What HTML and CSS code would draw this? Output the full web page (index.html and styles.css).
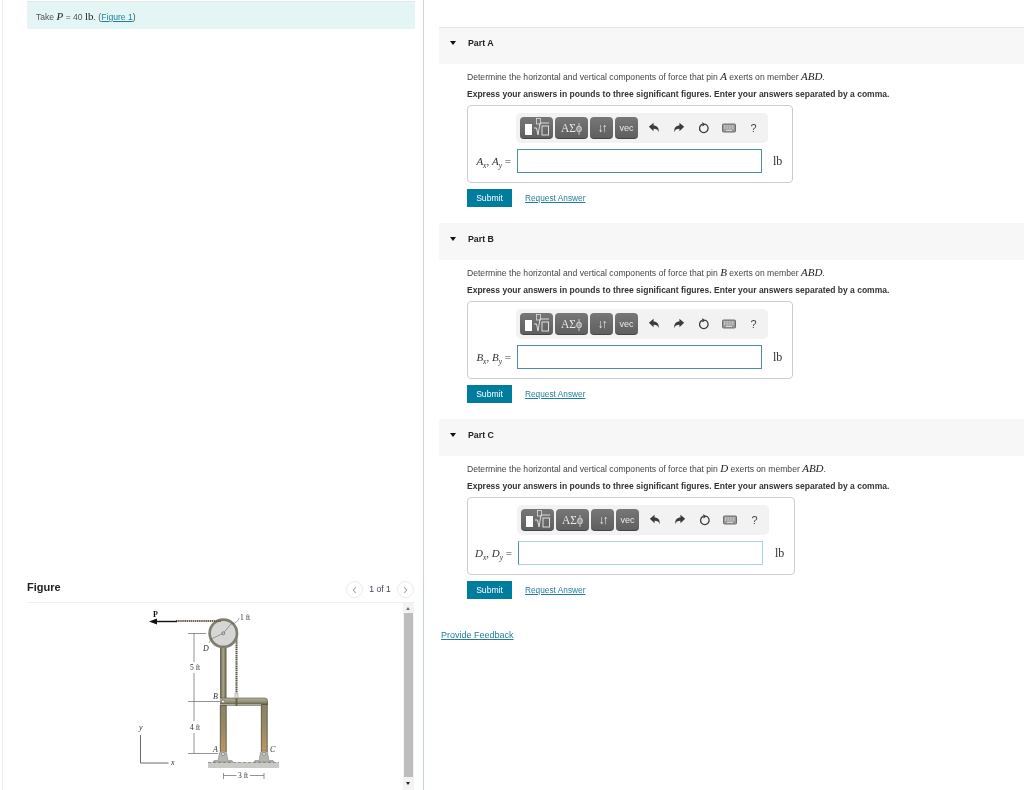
FILE: index.html
```html
<!DOCTYPE html>
<html lang="en">
<head>
<meta charset="utf-8">
<title>Part A</title>
<link rel="stylesheet" href="styles.css">
</head>
<body>
<svg class="defs" width="0" height="0" aria-hidden="true">
  <defs>
    <symbol id="i-undo" viewBox="0 0 14 14"><path d="M1 5.500 6.500 1v3c4 0 6.500 2.500 6 8-1-3-2.500-4-6-4v2.800z" fill="#3b3b3b"/></symbol>
    <symbol id="i-redo" viewBox="0 0 14 14"><path d="M13 5.500 7.500 1v3c-4 0-6.500 2.500-6 8 1-3 2.500-4 6-4v2.800z" fill="#3b3b3b"/></symbol>
    <symbol id="i-reset" viewBox="0 0 14 14"><path d="M8.300 2.600a5 5 0 1 1-3.500.2" fill="none" stroke="#3b3b3b" stroke-width="1.500"/><path d="M4.800 0.300 9 2.600 5.200 5.300z" fill="#3b3b3b"/></symbol>
    <symbol id="i-kbd" viewBox="0 0 14 10"><rect x="0.500" y="1" width="13" height="8" rx="1" fill="#999" stroke="#6d6d6d"/><path d="M2 3h10M2 5h10" stroke="#e8e8e8" stroke-dasharray="1 .6"/><path d="M4 7.300h6" stroke="#e8e8e8"/></symbol>
    <symbol id="i-templ" viewBox="0 0 32 22"><rect x="4" y="7" width="7" height="11" fill="#fff"/><rect x="15.500" y="1.500" width="4" height="5.500" fill="none" stroke="#ddd" stroke-width=".8"/><path d="M13 11h2.500l1.500 7 2-12h9" fill="none" stroke="#ddd"/><rect x="21" y="9" width="6.500" height="9" fill="none" stroke="#ddd"/></symbol>
  </defs>
</svg>
<main class="page">
  <aside class="left">
    <section class="left-top">
      <p class="banner">Take <i class="m">P</i> = 40 <span class="s">lb</span>. (<a href="#">Figure 1</a>)</p>
    </section>
    <section class="left-bottom">
      <header class="figure-head">
        <h2>Figure</h2>
        <nav class="pager">
          <span class="circle">&lsaquo;</span>
          <span class="count">1 of 1</span>
          <span class="circle">&rsaquo;</span>
        </nav>
      </header>
      <div class="figure-body">
        <svg class="diagram" width="180" height="190" viewBox="120 600 180 190" role="img" aria-label="Frame with pulley">
          <defs>
            <linearGradient id="col" x1="0" x2="1" y1="0" y2="0"><stop offset="0" stop-color="#625e47"/><stop offset=".5" stop-color="#aaa68c"/><stop offset="1" stop-color="#5a5741"/></linearGradient>
            <linearGradient id="bar" x1="0" x2="0" y1="0" y2="1"><stop offset="0" stop-color="#b5b39c"/><stop offset=".6" stop-color="#8f8c72"/><stop offset="1" stop-color="#4f4c38"/></linearGradient>
            <linearGradient id="low" x1="0" x2="0" y1="0" y2="1"><stop offset="0" stop-color="#85826a"/><stop offset=".5" stop-color="#9a8964"/><stop offset="1" stop-color="#bb9666"/></linearGradient>
          </defs>
          <rect x="208" y="762" width="71" height="6" fill="#c9c9c5"/>
          <path d="M208 762.500h71" stroke="#8a8a84" stroke-width=".8" stroke-dasharray="3 2"/>
          <path d="M194 633v29M194 673v48M194 733v20M188 633.500h18M188 701.500h32M188 753.500h30" stroke="#666" stroke-width=".7" fill="none"/>
          <path d="M223.500 773v6M264 773v6M223.500 775.500h13M250 775.500h14" stroke="#666" stroke-width=".7" fill="none"/>
          <rect x="220" y="645" width="6.500" height="55" fill="url(#col)"/>
          <rect x="220" y="705" width="6.500" height="47" fill="url(#low)"/>
          <rect x="261" y="702" width="6.500" height="50" fill="url(#low)"/>
          <path d="M220.300 705v47M226.200 705v47M261.300 705v47M267.200 702v50" stroke="#55523d" stroke-width=".7"/>
          <path d="M220 698h45q2.500 0 2.500 3v4h-6.500v-.5h-41z" fill="url(#bar)"/>
          <path d="M220 698h45q2.500 0 2.500 3v4M220 705.500h41" stroke="#55523d" stroke-width=".6" fill="none"/>
          <circle cx="223" cy="701.500" r="1.500" fill="#eee" stroke="#555" stroke-width=".5"/>
          <path d="M236.500 636v70" stroke="#55523f" stroke-width="2" stroke-dasharray="1.500 .6"/>
          <rect x="235" y="693" width="3" height="5" fill="#e3e3da" stroke="#777" stroke-width=".4"/>
          <circle cx="223.300" cy="633.300" r="15" fill="#7f7f70"/>
          <circle cx="223.300" cy="633.300" r="12.300" fill="#d6d6d4"/>
          <circle cx="223.300" cy="633.300" r="1.500" fill="#eee" stroke="#444" stroke-width=".6"/>
          <path d="M223.300 633.300 231 624q7-1 8-6M223.300 633.300 211 639l-2 4" stroke="#555" stroke-width=".5" fill="none"/>
          <path d="M176 621h45" stroke="#6e6350" stroke-width="2" stroke-dasharray="1.500 .6"/>
          <path d="M155 621.500h22" stroke="#111" stroke-width="1.400"/>
          <path d="M149 621.500l8-3v6z" fill="#111"/>
          <path d="M213 762l1-1.500h4l1.500-8q3.500-3.500 7 0l1.500 8h4l1 1.500z" fill="#b5b5ae" stroke="#666" stroke-width=".4"/>
          <path d="M254 762l1-1.500h4l1.500-8q3.500-3.500 7 0l1.500 8h4l1 1.500z" fill="#b5b5ae" stroke="#666" stroke-width=".4"/>
          <circle cx="223" cy="754" r="1.500" fill="#eee" stroke="#555" stroke-width=".5"/>
          <circle cx="264" cy="754" r="1.500" fill="#eee" stroke="#555" stroke-width=".5"/>
          <path d="M140.500 735v28h28" stroke="#444" stroke-width=".8" fill="none"/>
          <g class="lbl">
            <text x="153" y="617" class="bold">P</text>
            <text x="240" y="620">1 ft</text>
            <text x="190" y="669.500">5 ft</text>
            <text x="190" y="729.500">4 ft</text>
            <text x="238" y="778">3 ft</text>
            <text x="203" y="651" class="it">D</text>
            <text x="213" y="698.500" class="it">B</text>
            <text x="213" y="751.500" class="it">A</text>
            <text x="270" y="751.500" class="it">C</text>
            <text x="139" y="730" class="it">y</text>
            <text x="171" y="764.500" class="it">x</text>
          </g>
        </svg>
        <div class="scrollbar">
          <span class="arrow up"></span>
          <span class="thumb"></span>
          <span class="arrow down"></span>
        </div>
      </div>
    </section>
  </aside>
  <div class="right">
    <section class="part">
      <h3 class="part-head"><span class="caret"></span>Part A</h3>
      <div class="part-body">
        <p class="q">Determine the horizontal and vertical components of force that pin <i class="m">A</i> exerts on member <i class="m">ABD</i>.</p>
        <p class="q strong">Express your answers in pounds to three significant figures. Enter your answers separated by a comma.</p>
        <div class="answer">
          <div class="toolbar">
            <span class="btn b-wide"><svg width="32" height="22"><use href="#i-templ"/></svg></span>
            <span class="btn b-wide sym">&Alpha;&Sigma;&#981;</span>
            <span class="btn b-small arrows">&darr;&uarr;</span>
            <span class="btn b-small">vec</span>
            <span class="tool first"><svg width="12" height="12"><use href="#i-undo"/></svg></span>
            <span class="tool"><svg width="12" height="12"><use href="#i-redo"/></svg></span>
            <span class="tool"><svg width="12" height="12"><use href="#i-reset"/></svg></span>
            <span class="tool"><svg width="14" height="10"><use href="#i-kbd"/></svg></span>
            <span class="tool help">?</span>
          </div>
          <div class="entry">
            <span class="label"><i>A<sub>x</sub></i>, <i>A<sub>y</sub></i> =</span>
            <span class="field"></span>
            <span class="unit">lb</span>
          </div>
        </div>
        <div class="actions"><span class="submit">Submit</span><a href="#">Request Answer</a></div>
      </div>
    </section>
    <section class="part">
      <h3 class="part-head"><span class="caret"></span>Part B</h3>
      <div class="part-body">
        <p class="q">Determine the horizontal and vertical components of force that pin <i class="m">B</i> exerts on member <i class="m">ABD</i>.</p>
        <p class="q strong">Express your answers in pounds to three significant figures. Enter your answers separated by a comma.</p>
        <div class="answer">
          <div class="toolbar">
            <span class="btn b-wide"><svg width="32" height="22"><use href="#i-templ"/></svg></span>
            <span class="btn b-wide sym">&Alpha;&Sigma;&#981;</span>
            <span class="btn b-small arrows">&darr;&uarr;</span>
            <span class="btn b-small">vec</span>
            <span class="tool first"><svg width="12" height="12"><use href="#i-undo"/></svg></span>
            <span class="tool"><svg width="12" height="12"><use href="#i-redo"/></svg></span>
            <span class="tool"><svg width="12" height="12"><use href="#i-reset"/></svg></span>
            <span class="tool"><svg width="14" height="10"><use href="#i-kbd"/></svg></span>
            <span class="tool help">?</span>
          </div>
          <div class="entry">
            <span class="label"><i>B<sub>x</sub></i>, <i>B<sub>y</sub></i> =</span>
            <span class="field"></span>
            <span class="unit">lb</span>
          </div>
        </div>
        <div class="actions"><span class="submit">Submit</span><a href="#">Request Answer</a></div>
      </div>
    </section>
    <section class="part">
      <h3 class="part-head"><span class="caret"></span>Part C</h3>
      <div class="part-body">
        <p class="q">Determine the horizontal and vertical components of force that pin <i class="m">D</i> exerts on member <i class="m">ABD</i>.</p>
        <p class="q strong">Express your answers in pounds to three significant figures. Enter your answers separated by a comma.</p>
        <div class="answer answer-focus">
          <div class="toolbar">
            <span class="btn b-wide"><svg width="32" height="22"><use href="#i-templ"/></svg></span>
            <span class="btn b-wide sym">&Alpha;&Sigma;&#981;</span>
            <span class="btn b-small arrows">&darr;&uarr;</span>
            <span class="btn b-small">vec</span>
            <span class="tool first"><svg width="12" height="12"><use href="#i-undo"/></svg></span>
            <span class="tool"><svg width="12" height="12"><use href="#i-redo"/></svg></span>
            <span class="tool"><svg width="12" height="12"><use href="#i-reset"/></svg></span>
            <span class="tool"><svg width="14" height="10"><use href="#i-kbd"/></svg></span>
            <span class="tool help">?</span>
          </div>
          <div class="entry">
            <span class="label"><i>D<sub>x</sub></i>, <i>D<sub>y</sub></i> =</span>
            <span class="field"></span>
            <span class="unit">lb</span>
          </div>
        </div>
        <div class="actions"><span class="submit">Submit</span><a href="#">Request Answer</a></div>
      </div>
    </section>
    <a class="feedback" href="#">Provide Feedback</a>
  </div>
</main>
</body>
</html>
```
FILE: styles.css
```css
* { box-sizing: border-box; }
html, body { margin: 0; height: 790px; overflow: hidden; background: #fff; }
body { font-family: "Liberation Sans", Arial, sans-serif; color: #333; font-size: 8.6px; }
.defs { position: absolute; }
a { color: #1f7f9e; text-decoration: underline; }
p, h2, h3 { margin: 0; }
.page { display: flex; height: 790px; filter: blur(.35px); }
.left { width: 422px; margin-left: 2px; flex: none; display: flex; flex-direction: column; border-left: 1px solid #eee; }
.left-top { height: 577px; padding: 1px 8px 0 24px; border-right: 1px solid #d5d5d5; }
.left-bottom { flex: 1; min-height: 0; display: flex; flex-direction: column; padding: 0 9px 0 24px; border-right: 1px solid #c3d3e2; }
.banner { height: 28px; background: #e4f5f6; border-top: 1px solid #e4e8e8; padding: 8px 0 0 9px; font-size: 8.6px; color: #555; line-height: 12px; }
.m { font-family: "Liberation Serif", serif; font-size: 11px; color: #222; }
.s { font-family: "Liberation Serif", serif; font-size: 11px; color: #222; }
.figure-head { height: 25px; flex: none; display: flex; align-items: center; justify-content: space-between; }
.figure-head h2 { font-size: 11px; color: #222; font-weight: 700; margin-bottom: 5px; }
.pager { display: flex; align-items: center; gap: 6px; margin-bottom: 1px; }
.circle { width: 17px; height: 17px; border-radius: 50%; border: 1px solid #eaeaea; color: #aaa; font-size: 15px; line-height: 13px; text-align: center; }
.count { font-size: 8.6px; color: #445; width: 22px; text-align: center; white-space: nowrap; }
.figure-body { flex: 1; min-height: 0; display: flex; justify-content: space-between; border-top: 1px solid #f0f0f0; overflow: hidden; }
.diagram { display: block; margin-left: 93px; margin-top: -3px; flex: none; }
.lbl text { font-family: "Liberation Serif", serif; font-size: 7.5px; fill: #333; }
.lbl .bold { font-weight: 700; fill: #111; font-size: 8px; }
.lbl .it { font-style: italic; font-size: 8px; }
.scrollbar { width: 11px; flex: none; background: #f3f3f3; display: flex; flex-direction: column; align-items: center; padding: 0 1px; height: 188px; }
.thumb { flex: 1; width: 9px; background: #bdbdbd; }
.arrow { flex: none; width: 9px; position: relative; }
.up { height: 10px; }
.down { height: 14px; }
.arrow::after { content: ""; position: absolute; left: 2px; border-left: 2.5px solid transparent; border-right: 2.5px solid transparent; }
.up::after { top: 4px; border-bottom: 3px solid #777; }
.down::after { top: 5px; border-top: 3px solid #222; }
.right { flex: 1; min-width: 0; padding: 27px 0 0 15px; }
.part { height: 196px; }
.part-head { height: 37px; background: #f7f7f7; display: flex; align-items: center; font-size: 8.8px; color: #222; font-weight: 700; padding: 0 0 6px 11px; }
.part:first-child .part-head { border-top: 1px solid #e6e6e6; }
.caret { width: 0; height: 0; margin-right: 12px; border-left: 3.5px solid transparent; border-right: 3.5px solid transparent; border-top: 4px solid #111; }
.part-body { padding-left: 28px; }
.q { line-height: 11px; height: 11px; color: #444; white-space: nowrap; }
.q:first-child { margin-top: 7px; }
.strong { font-weight: 700; font-size: 8.5px; color: #333; margin-top: 7px; }
.answer { margin-top: 5px; width: 326px; height: 78px; border: 1px solid #ccc; border-radius: 4px; padding: 7px 0 0 48px; }
.toolbar { width: 252px; height: 30px; background: #f2f2f2; border-radius: 5px; display: flex; align-items: center; padding-left: 4px; gap: 2px; }
.btn { height: 22px; background: linear-gradient(#777, #5f5f5f); border-radius: 4px; color: #e8e8e8; display: flex; align-items: center; justify-content: center; border-bottom: 1px solid #444; font-size: 9px; }
.b-wide { width: 33px; }
.b-small { width: 23px; }
.sym { font-family: "Liberation Serif", serif; font-size: 11.5px; }
.arrows { font-size: 12px; letter-spacing: -2px; }
.tool { width: 23px; display: flex; align-items: center; justify-content: center; color: #444; }
.first { margin-left: 2px; }
.help { font-size: 11px; }
.entry { display: flex; align-items: center; margin-top: 6px; margin-left: -48px; }
.label { width: 49px; font-family: "Liberation Serif", serif; font-size: 11px; color: #333; white-space: nowrap; text-align: right; padding-right: 6px; }
.label sub { font-size: 7.5px; line-height: 0; }
.field { width: 245px; height: 24px; flex: none; border: 1px solid #4c8ea0; background: #fff; }
.unit { font-family: "Liberation Serif", serif; font-size: 12px; margin-left: 11px; }
.actions { display: flex; align-items: center; gap: 13px; margin-top: 6px; font-size: 8.3px; }
.submit { width: 45px; height: 18px; background: #007c9e; color: #fff; display: flex; align-items: center; justify-content: center; font-size: 8.6px; }
.answer-focus { width: 328px; padding-left: 49px; }
.answer-focus .entry { margin-left: -49px; }
.answer-focus .label { width: 50px; }
.answer-focus .field { border-color: #a8d5e0; border-left-color: #4c8ea0; }
.answer-focus .unit { margin-left: 12px; }
.feedback { display: block; margin: 15px 0 0 2px; font-size: 9px; }
```
